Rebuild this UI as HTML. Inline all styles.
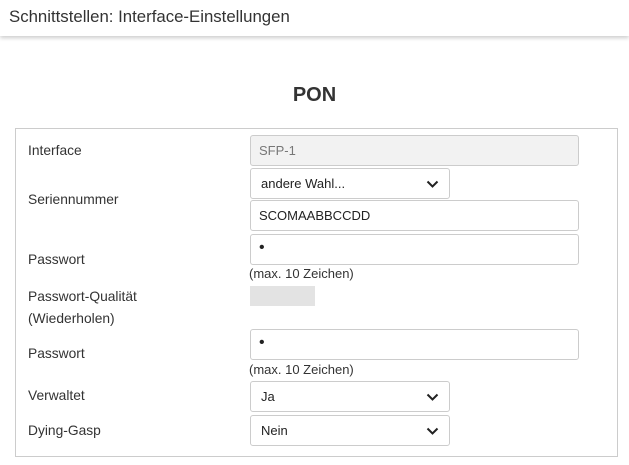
<!DOCTYPE html>
<html><head><meta charset="utf-8"><style>
*{box-sizing:border-box;margin:0;padding:0}
body{width:629px;height:465px;background:#fff;font-family:"Liberation Sans",sans-serif;color:#333;position:relative;overflow:hidden;font-size:13px}
.hdr{position:absolute;left:0;top:0;width:629px;height:36px;background:#fff;box-shadow:0 2px 4px rgba(0,0,0,.2);font-size:16.8px;padding:7px 0 0 9px;color:#333}
h1{position:absolute;top:84px;left:0;width:629px;text-align:center;font-size:20px;font-weight:bold;color:#333}
.box{position:absolute;left:15px;top:128px;width:603px;height:329px;border:1px solid #ccc}
.l{position:absolute;left:28px;font-size:13.8px;color:#333}
.f{position:absolute;left:250px;width:329px;height:31px;border:1px solid #ccc;border-radius:3px;background:#fff;font-size:13px;padding:7px 0 0 8px;color:#222}
.s{width:200px;padding-left:10px}
.s svg{position:absolute;right:10px;top:11px}
.m{position:absolute;left:249px;font-size:13px;color:#333}
</style></head><body>
<div class="hdr">Schnittstellen: Interface-Einstellungen</div>
<h1>PON</h1>
<div class="box"></div>
<div class="l" style="top:143px">Interface</div>
<div class="f" style="top:135px;background:#f2f2f2;color:#777">SFP-1</div>
<div class="l" style="top:192px">Seriennummer</div>
<div class="f s" style="top:168px">andere Wahl...<svg width="13" height="9"><path d="M1.5 1.5L6.5 6.5L11.5 1.5" stroke="#222" stroke-width="2" fill="none"/></svg></div>
<div class="f" style="top:200px">SCOMAABBCCDD</div>
<div class="l" style="top:252px">Passwort</div>
<div class="f" style="top:234px;font-size:16px;padding-top:4px">•</div>
<div class="m" style="top:266px">(max. 10 Zeichen)</div>
<div class="l" style="top:289px">Passwort-Qualität</div>
<div class="l" style="top:311px">(Wiederholen)</div>
<div style="position:absolute;left:250px;top:286px;width:65px;height:20px;background:#e3e3e3"></div>
<div class="l" style="top:346px">Passwort</div>
<div class="f" style="top:329px;font-size:16px;padding-top:4px">•</div>
<div class="m" style="top:362px">(max. 10 Zeichen)</div>
<div class="l" style="top:388px">Verwaltet</div>
<div class="f s" style="top:381px">Ja<svg width="13" height="9"><path d="M1.5 1.5L6.5 6.5L11.5 1.5" stroke="#222" stroke-width="2" fill="none"/></svg></div>
<div class="l" style="top:423px">Dying-Gasp</div>
<div class="f s" style="top:415px">Nein<svg width="13" height="9"><path d="M1.5 1.5L6.5 6.5L11.5 1.5" stroke="#222" stroke-width="2" fill="none"/></svg></div>
</body></html>
